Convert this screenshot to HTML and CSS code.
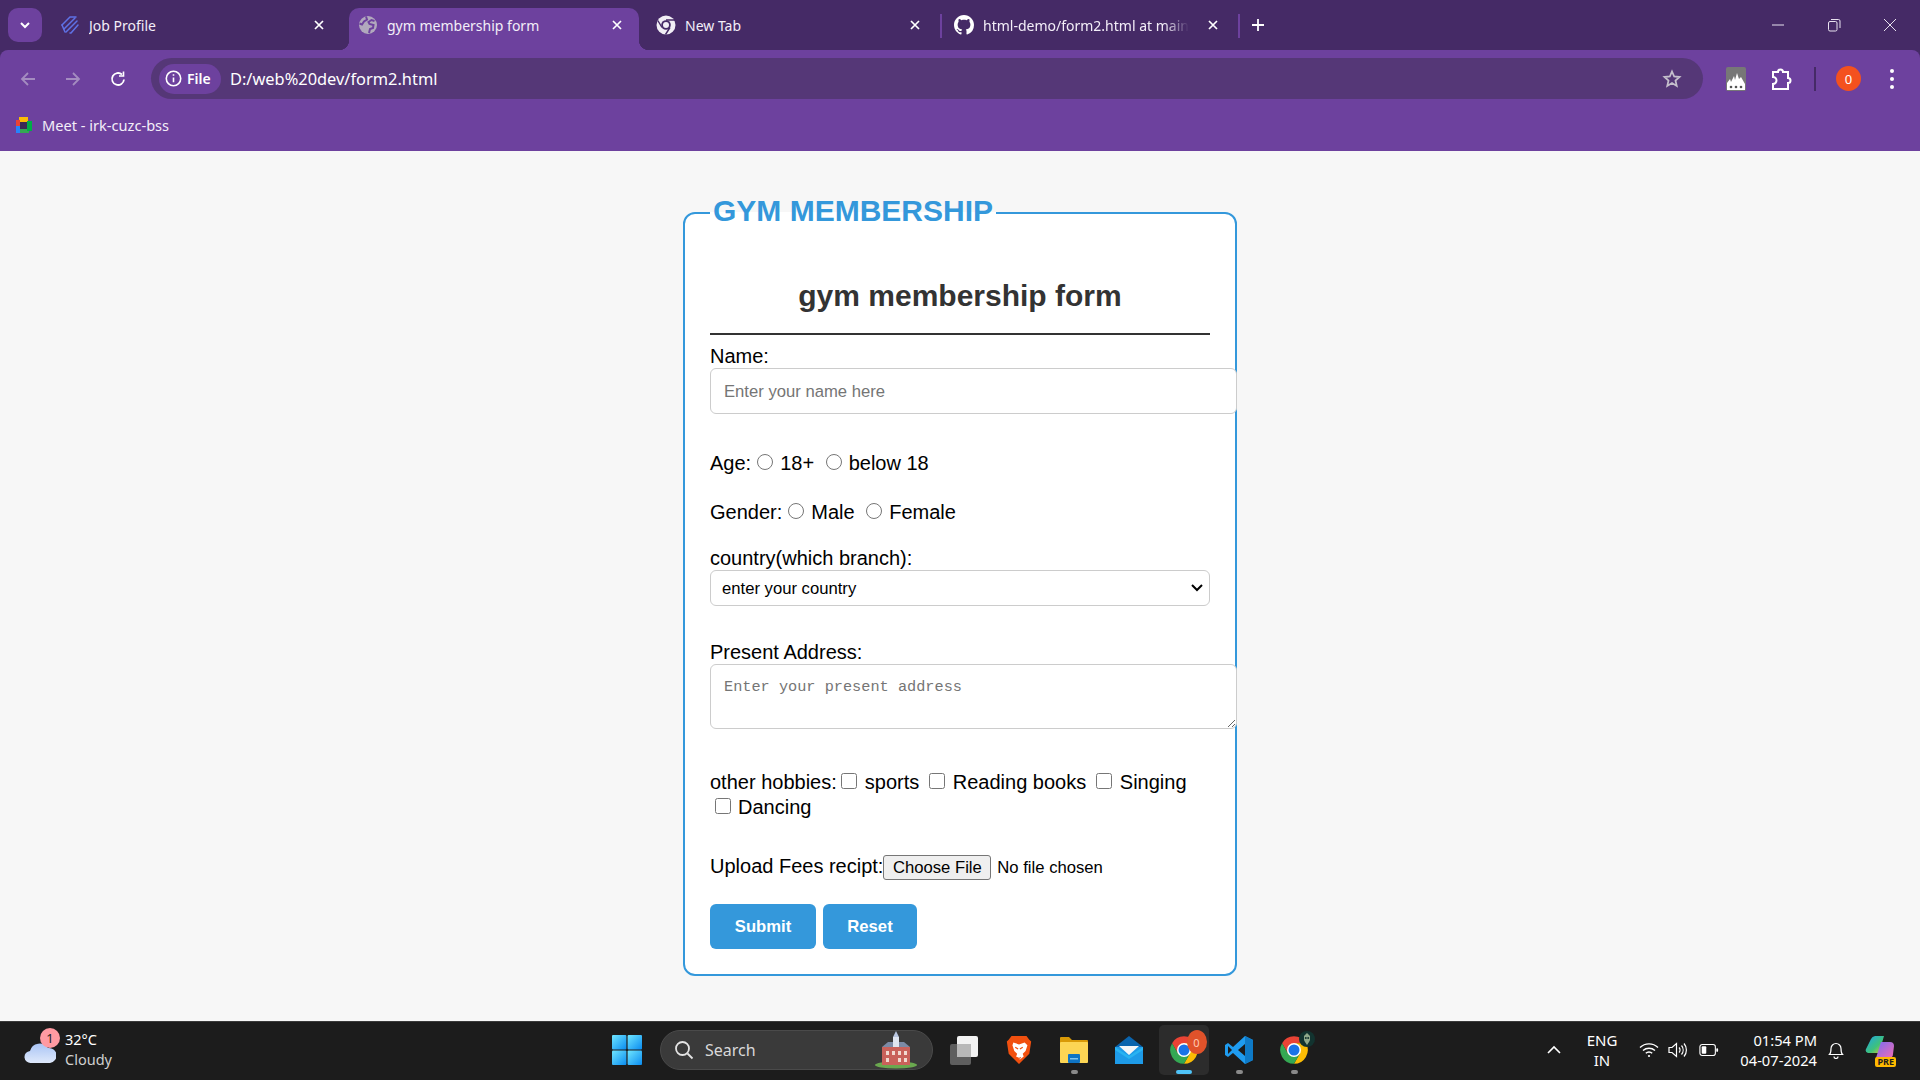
FILE: index.html
```html
<!DOCTYPE html>
<html lang="en">
<head>
    <meta charset="UTF-8">
    <title>gym membership form</title>
    <link rel="stylesheet" href="styles.css">
</head>
<body>

    <svg class="defs" width="0" height="0">
        <defs>
            <g id="chrome-logo">
                <path d="M2.47 6.5A11 11 0 0 1 21.53 6.5H12L7.24 14.75Z" fill="#ea4335"/>
                <path d="M21.53 6.5A11 11 0 0 1 12 23L16.76 14.75 12 6.5Z" fill="#fbbc04"/>
                <path d="M12 23A11 11 0 0 1 2.47 6.5L7.24 14.75H16.76Z" fill="#34a853"/>
                <circle cx="12" cy="12" r="5.6" fill="#fff"/>
                <circle cx="12" cy="12" r="4.4" fill="#1a73e8"/>
            </g>
            <linearGradient id="win-blue" x1="0" y1="0" x2="1" y2="1">
                <stop offset="0" stop-color="#6fe6ff"/>
                <stop offset="1" stop-color="#0a8cf0"/>
            </linearGradient>
            <linearGradient id="cloud-blue" x1="0" y1="0" x2="0" y2="1">
                <stop offset="0" stop-color="#a9c4f5"/>
                <stop offset="1" stop-color="#dfe9fb"/>
            </linearGradient>
            <linearGradient id="copilot-a" x1="0" y1="0" x2="1" y2="1">
                <stop offset="0" stop-color="#1fa4e8"/>
                <stop offset="0.6" stop-color="#3ec27a"/>
                <stop offset="1" stop-color="#e6c72e"/>
            </linearGradient>
            <linearGradient id="copilot-b" x1="0" y1="0" x2="1" y2="1">
                <stop offset="0" stop-color="#7a6cf0"/>
                <stop offset="1" stop-color="#f06cb4"/>
            </linearGradient>
        </defs>
    </svg>

    <header class="browser">
        <div class="tab-strip">
            <button class="tab-menu">
                <svg width="14" height="14" viewBox="0 0 14 14"><path d="M3 5l4 4 4-4" fill="none" stroke="#fff" stroke-width="2"/></svg>
            </button>

            <div class="tabs">
                <div class="tab">
                    <svg class="favicon" viewBox="0 0 20 20" fill="none" stroke="#5f72e6" stroke-width="1.5" stroke-linecap="round">
                        <path d="M2 10L10 2h6"/><path d="M4 14L15 3"/><path d="M6 17L17 6"/><path d="M10 18h1l7-8"/><path d="M2 10l3 7"/>
                    </svg>
                    <span class="tab-title">Job Profile</span>
                    <svg class="tab-close" viewBox="0 0 12 12"><path d="M2 2l8 8M10 2l-8 8" stroke="#fff" stroke-width="1.7"/></svg>
                </div>
                <span class="tab-sep clear"></span>
                <div class="tab active">
                    <svg class="favicon" viewBox="0 0 20 20">
                        <circle cx="10" cy="10" r="9" fill="#b1a8bd"/>
                        <path d="M8 1.5l1 3-3 2-2 3-2.5-1M11 18l1-4 3-1 .5-3-4-1-1-2 3-2 3 1" fill="none" stroke="#6d419e" stroke-width="2"/>
                    </svg>
                    <span class="tab-title">gym membership form</span>
                    <svg class="tab-close" viewBox="0 0 12 12"><path d="M2 2l8 8M10 2l-8 8" stroke="#fff" stroke-width="1.7"/></svg>
                </div>
                <span class="tab-sep clear"></span>
                <div class="tab">
                    <svg class="favicon" viewBox="0 0 20 20">
                        <circle cx="10" cy="10" r="9.5" fill="#f1eef5"/>
                        <circle cx="10" cy="10" r="4.8" fill="#452a66"/>
                        <circle cx="10" cy="10" r="3" fill="#f1eef5"/>
                        <path d="M10 5H19M6 12.5L1.8 5.5M14 12.5L9.5 19.5" stroke="#452a66" stroke-width="1.4"/>
                    </svg>
                    <span class="tab-title">New Tab</span>
                    <svg class="tab-close" viewBox="0 0 12 12"><path d="M2 2l8 8M10 2l-8 8" stroke="#fff" stroke-width="1.7"/></svg>
                </div>
                <span class="tab-sep"></span>
                <div class="tab">
                    <svg class="favicon" viewBox="0 0 16 16">
                        <path fill="#fff" d="M8 0C3.58 0 0 3.58 0 8c0 3.54 2.29 6.53 5.47 7.59.4.07.55-.17.55-.38 0-.19-.01-.82-.01-1.49-2.01.37-2.53-.49-2.69-.94-.09-.23-.48-.94-.82-1.13-.28-.15-.68-.52-.01-.53.63-.01 1.08.58 1.23.82.72 1.21 1.87.87 2.33.66.07-.52.28-.87.51-1.07-1.78-.2-3.64-.89-3.64-3.95 0-.87.31-1.59.82-2.15-.08-.2-.36-1.02.08-2.12 0 0 .67-.21 2.2.82.64-.18 1.32-.27 2-.27s1.36.09 2 .27c1.53-1.04 2.2-.82 2.2-.82.44 1.1.16 1.92.08 2.12.51.56.82 1.27.82 2.15 0 3.07-1.87 3.75-3.65 3.95.29.25.54.73.54 1.48 0 1.07-.01 1.93-.01 2.2 0 .21.15.46.55.38A8.01 8.01 0 0 0 16 8c0-4.42-3.58-8-8-8z"/>
                    </svg>
                    <span class="tab-title fade">html-demo/form2.html at main</span>
                    <svg class="tab-close" viewBox="0 0 12 12"><path d="M2 2l8 8M10 2l-8 8" stroke="#fff" stroke-width="1.7"/></svg>
                </div>
                <span class="tab-sep"></span>
                <svg class="new-tab" viewBox="0 0 14 14"><path d="M7 1v12M1 7h12" stroke="#fff" stroke-width="1.8"/></svg>
            </div>

            <div class="window-controls">
                <svg viewBox="0 0 14 14"><path d="M1 7h12" stroke="#e8e2ef" stroke-width="1"/></svg>
                <svg viewBox="0 0 14 14" fill="none" stroke="#e8e2ef"><rect x="1.5" y="3.5" width="8.5" height="9.5" rx="1.5"/><path d="M4 1.5h7.5a1.5 1.5 0 0 1 1.5 1.5v7"/></svg>
                <svg viewBox="0 0 14 14"><path d="M1 1l12 12M13 1L1 13" stroke="#e8e2ef" stroke-width="1"/></svg>
            </div>
        </div>

        <div class="toolbar">
            <div class="nav-buttons">
                <svg viewBox="0 0 18 18" fill="none" stroke="#a48cc0" stroke-width="1.8"><path d="M16 9H3M9 3L3 9l6 6"/></svg>
                <svg viewBox="0 0 18 18" fill="none" stroke="#a48cc0" stroke-width="1.8"><path d="M2 9h13M9 3l6 6-6 6"/></svg>
                <svg viewBox="0 0 18 18" fill="none" stroke="#fff" stroke-width="1.8"><path d="M15 9.5A6 6 0 1 1 13 4.5"/><path d="M14.5 1.5V6H10" stroke-width="1.6"/></svg>
            </div>
            <div class="address-bar">
                <div class="site-chip">
                    <svg viewBox="0 0 16 16" fill="none" stroke="#fff" stroke-width="1.5"><circle cx="8" cy="8" r="6.8"/><path d="M8 7v4.5M8 4v1.5"/></svg>
                    <span>File</span>
                </div>
                <span class="url">D:/web%20dev/form2.html</span>
                <svg class="star" viewBox="0 0 20 20"><path d="M10 2.5l2.2 5 5.3.5-4 3.6 1.2 5.3L10 14l-4.7 2.9 1.2-5.3-4-3.6 5.3-.5z" fill="none" stroke="#c5bfcc" stroke-width="1.8"/></svg>
            </div>
            <div class="toolbar-actions">
                <svg class="ext-fire" viewBox="0 0 20 24">
                    <rect width="20" height="24" rx="2" fill="#777"/>
                    <path d="M1 23v-7l3-4 1 3 3-6 1 4 2-7 2 6 2-2 4 7v6z" fill="#fff"/>
                    <circle cx="5" cy="20" r="1.3" fill="#555"/><circle cx="10" cy="20" r="1.3" fill="#555"/><circle cx="15" cy="20" r="1.3" fill="#555"/>
                </svg>
                <svg class="ext-puzzle" viewBox="0 0 22 24"><path d="M2 5h5a2.5 2.5 0 0 1 5 0h5v6a2.5 2.5 0 0 1 0 5v6H2v-5a3 3 0 0 0 0-7z" fill="none" stroke="#fff" stroke-width="2"/></svg>
                <span class="action-sep"></span>
                <span class="profile-badge">0</span>
                <svg class="kebab" viewBox="0 0 6 22"><circle cx="3" cy="3" r="2" fill="#fff"/><circle cx="3" cy="11" r="2" fill="#fff"/><circle cx="3" cy="19" r="2" fill="#fff"/></svg>
            </div>
        </div>

        <div class="bookmarks">
            <svg viewBox="0 0 18 18">
                <rect x="4" y="1" width="9" height="5" fill="#fbbc04"/>
                <rect x="1" y="4" width="4" height="6" fill="#ea4335"/>
                <rect x="1" y="10" width="4" height="7" fill="#2684fc"/>
                <rect x="5" y="13" width="9" height="4" fill="#34a853"/>
                <rect x="12" y="5" width="5" height="10" fill="#00ac47"/>
                <rect x="5" y="6" width="7" height="7" fill="#3c2a55"/>
            </svg>
            <span>Meet - irk-cuzc-bss</span>
        </div>
    </header>

    <main class="page">
        <fieldset class="card">
            <legend>GYM MEMBERSHIP</legend>
            <h1>gym membership form</h1>

            <form>
                <div class="name-row">
                    <label class="block-label" for="name">Name:</label>
                    <input class="text-input" type="text" id="name" placeholder="Enter your name here">
                </div>

                <div class="age-row">Age:<input type="radio" name="age"><label>18+</label> <input type="radio" name="age"><label>below 18</label></div>

                <div class="gender-row">Gender:<input type="radio" name="gender"><label>Male</label> <input type="radio" name="gender"><label>Female</label></div>

                <div class="country-row">
                    <label class="block-label" for="country">country(which branch):</label>
                    <select id="country">
                        <option>enter your country</option>
                        <option>India</option>
                    </select>
                </div>

                <div class="address-row">
                    <label class="block-label" for="address">Present Address:</label>
                    <textarea id="address" placeholder="Enter your present address"></textarea>
                </div>

                <div class="hobby-row">other hobbies:<input type="checkbox"><label>sports</label> <input type="checkbox"><label>Reading books</label> <input type="checkbox"><label>Singing</label> <input type="checkbox"><label>Dancing</label></div>

                <div class="upload-row">Upload Fees recipt:<input type="file"></div>

                <div class="button-row">
                    <button type="button" class="submit-btn">Submit</button>
                    <button type="button" class="reset-btn">Reset</button>
                </div>
            </form>
        </fieldset>
    </main>

    <footer class="taskbar">
        <div class="weather">
            <div class="weather-icon">
                <svg viewBox="0 0 32 24"><path d="M7 23a6 6 0 0 1-1-12 10 10 0 0 1 18-3 7 7 0 0 1 2 15z" fill="url(#cloud-blue)"/></svg>
                <span class="weather-badge">1</span>
            </div>
            <div class="weather-text">
                <span>32°C</span>
                <span class="dim">Cloudy</span>
            </div>
        </div>

        <div class="task-center">
            <svg class="win-logo" viewBox="0 0 30 30">
                <rect width="14.4" height="14.4" rx="1" fill="url(#win-blue)"/>
                <rect x="15.6" width="14.4" height="14.4" rx="1" fill="url(#win-blue)"/>
                <rect y="15.6" width="14.4" height="14.4" rx="1" fill="url(#win-blue)"/>
                <rect x="15.6" y="15.6" width="14.4" height="14.4" rx="1" fill="url(#win-blue)"/>
            </svg>

            <div class="search-box">
                <svg class="search-icon" viewBox="0 0 20 20" fill="none" stroke="#e4e4e4" stroke-width="1.8"><circle cx="8.5" cy="8.5" r="6.5"/><path d="M13.5 13.5l5 5"/></svg>
                <span>Search</span>
                <svg class="search-art" viewBox="0 0 44 38">
                    <ellipse cx="22" cy="34" rx="21" ry="3.5" fill="#6aa84f"/>
                    <rect x="8" y="16" width="28" height="18" fill="#c9615a"/>
                    <path d="M8 16l6-5h16l6 5z" fill="#7c8aa5"/>
                    <rect x="19" y="6" width="6" height="10" fill="#dfe5f0"/>
                    <path d="M22 0l3 6h-6z" fill="#b9c6e0"/>
                    <path d="M12 20h3v4h-3zM18 20h3v4h-3zM24 20h3v4h-3zM30 20h3v4h-3zM12 27h3v4h-3zM24 27h3v4h-3zM30 27h3v4h-3z" fill="#f2d9d0"/>
                </svg>
            </div>

            <div class="task-icon">
                <svg viewBox="0 0 30 30">
                    <rect x="1" y="9" width="21" height="21" rx="2" fill="#5e5e5e"/>
                    <rect x="8" y="1" width="21" height="21" rx="2" fill="#f2f2f2"/>
                    <rect x="8" y="9" width="14" height="13" fill="#b8b8b8"/>
                </svg>
            </div>
            <div class="task-icon">
                <svg viewBox="0 0 30 32">
                    <path d="M7 1h16l3 4 2 2-2 13-11 11L4 20 2 7l2-2z" fill="#f1500f"/>
                    <path d="M9 8l6 2 6-2 3 3-2 6-3 3 1 3-4 3-4-3 1-3-3-3-2-6z" fill="#fff"/>
                    <path d="M11 13l3 2M19 13l-3 2M13 24l2 1 2-1" stroke="#f1500f" stroke-width="1.3" fill="none"/>
                </svg>
            </div>
            <div class="task-icon open">
                <svg viewBox="0 0 30 30">
                    <path d="M1 3a1 1 0 0 1 1-1h8l3 3h15a1 1 0 0 1 1 1v4H1z" fill="#d99a07"/>
                    <rect x="1" y="7" width="28" height="21" rx="1" fill="#fcd554"/>
                    <rect x="9" y="19" width="12" height="9" rx="1" fill="#0f74c4"/>
                    <rect x="11" y="23" width="8" height="1.5" fill="#7fc3f0"/>
                </svg>
            </div>
            <div class="task-icon">
                <svg viewBox="0 0 30 30">
                    <path d="M15 1L1 12h28z" fill="#0a64ad"/>
                    <rect x="1" y="12" width="28" height="17" fill="#1e9be8"/>
                    <path d="M5 11h20l-10 9z" fill="#f4f6f8"/>
                    <path d="M1 12l14 9 14-9v3l-14 9-14-9z" fill="#29b3f2"/>
                </svg>
            </div>
            <div class="task-icon active open">
                <svg viewBox="0 0 24 24"><use href="#chrome-logo"/></svg>
                <span class="task-badge">0</span>
            </div>
            <div class="task-icon open">
                <svg viewBox="0 0 30 30">
                    <path d="M21 1l8 4v20l-8 4-12-11-5 4-3-2v-10l3-2 5 4z" fill="#1f9cf0"/>
                    <path d="M21 1l8 4v20l-8 4z" fill="#0e7ac7"/>
                    <path d="M21 9l-7 6 7 6z" fill="#1c1c1c"/>
                    <path d="M4 11l4 4-4 4z" fill="#1c1c1c"/>
                </svg>
            </div>
            <div class="task-icon open">
                <svg viewBox="0 0 24 24"><use href="#chrome-logo"/></svg>
                <svg class="profile-pic" viewBox="0 0 16 16">
                    <circle cx="8" cy="8" r="8" fill="#12332f"/>
                    <path d="M5 5l3-3 3 3v4l-1 2-2 3-2-3-1-2z" fill="#8fa88a"/>
                    <circle cx="6.8" cy="7" r="1" fill="#12332f"/><circle cx="9.2" cy="7" r="1" fill="#12332f"/>
                </svg>
            </div>
        </div>

        <div class="tray">
            <svg class="tray-chevron" viewBox="0 0 14 10"><path d="M1 8l6-6 6 6" fill="none" stroke="#fff" stroke-width="1.6"/></svg>
            <div class="lang"><span>ENG</span><span>IN</span></div>
            <svg class="tray-wifi" viewBox="0 0 20 16" fill="none" stroke="#fff" stroke-width="1.4"><path d="M1 5.5a13 13 0 0 1 18 0M4 8.5a9 9 0 0 1 12 0M6.8 11.3a4.5 4.5 0 0 1 6.4 0"/><circle cx="10" cy="14" r="1.1" fill="#fff" stroke="none"/></svg>
            <svg class="tray-volume" viewBox="0 0 20 16" fill="none" stroke="#fff" stroke-width="1.2"><path d="M1 5.5v5h3l4.5 4V1.5L4 5.5z"/><path d="M11 5.5a3.5 3.5 0 0 1 0 5M13.5 3.5a7 7 0 0 1 0 9M16 1.5a10 10 0 0 1 0 13"/></svg>
            <svg class="tray-battery" viewBox="0 0 22 14" fill="none"><rect x="1" y="1" width="17" height="12" rx="2.5" stroke="#fff" stroke-width="1.2"/><rect x="3" y="3" width="5" height="8" rx="1" fill="#fff"/><rect x="19" y="5" width="2" height="4" rx="1" fill="#fff"/></svg>
            <div class="clock"><span>01:54 PM</span><span>04-07-2024</span></div>
            <svg class="tray-bell" viewBox="0 0 16 18" fill="none" stroke="#fff" stroke-width="1.2"><path d="M1.5 13.5c1.5-1.5 1.5-3 1.5-6a5 5 0 0 1 10 0c0 3 0 4.5 1.5 6z"/><path d="M6 15.5a2 2 0 0 0 4 0"/></svg>
            <div class="copilot">
                <svg viewBox="0 0 30 24">
                    <path d="M10 1h9l-5 17H3a3 3 0 0 1-2-4l5-10a5 5 0 0 1 4-3z" fill="url(#copilot-a)"/>
                    <path d="M16 7h9a4 4 0 0 1 4 4l-1 8a4 4 0 0 1-4 4H11z" fill="url(#copilot-b)"/>
                </svg>
                <span class="pre-tag">PRE</span>
            </div>
        </div>
    </footer>

</body>
</html>
```

FILE: styles.css
```css
* {
    box-sizing: border-box;
}
html, body {
    height: 100%;
}
body {
    margin: 0;
    display: flex;
    flex-direction: column;
    overflow: hidden;
    font-family: "Liberation Sans", Arial, sans-serif;
    background: #f7f7f7;
}
.defs {
    position: absolute;
}

/* browser chrome */
.browser {
    flex: none;
    background: #452a66;
    color: #fff;
    font-family: "Noto Sans", sans-serif;
}
.tab-strip {
    height: 50px;
    display: flex;
    padding: 8px 0 0 8px;
}
.tab-menu {
    width: 34px;
    height: 34px;
    padding: 0;
    border: none;
    border-radius: 10px;
    background: #6d419e;
    display: flex;
    align-items: center;
    justify-content: center;
}
.tabs {
    display: flex;
    margin-left: 9px;
    flex: 1;
}
.tab {
    width: 290px;
    height: 42px;
    padding: 0 13px 8px 9px;
    display: flex;
    align-items: center;
    font-size: 14px;
    color: #f3eef8;
    position: relative;
}
.tab.active {
    background: #6d419e;
    border-radius: 10px 10px 0 0;
}
.tab.active::before, .tab.active::after {
    content: "";
    position: absolute;
    bottom: 0;
    width: 10px;
    height: 10px;
}
.tab.active::before {
    left: -10px;
    background: radial-gradient(circle at 0 0, transparent 10px, #6d419e 10.5px);
}
.tab.active::after {
    right: -10px;
    background: radial-gradient(circle at 100% 0, transparent 10px, #6d419e 10.5px);
}
.favicon {
    width: 20px;
    height: 20px;
    flex: none;
    margin-right: 9px;
}
.tab-title {
    flex: 1;
    white-space: nowrap;
    overflow: hidden;
}
.tab-title.fade {
    -webkit-mask-image: linear-gradient(to right, #000 88%, transparent);
    mask-image: linear-gradient(to right, #000 88%, transparent);
}
.tab-close {
    width: 12px;
    height: 12px;
    flex: none;
    margin-left: 18px;
    margin-right: 3px;
}
.tab-sep {
    width: 2px;
    height: 24px;
    margin: 6px 3px 0;
    background: #6d419e;
}
.tab-sep.clear {
    background: transparent;
}
.new-tab {
    width: 14px;
    height: 14px;
    margin: 10px 0 0 8px;
}
.window-controls {
    display: flex;
    gap: 42px;
    padding: 10px 23px 0 0;
}
.window-controls svg {
    width: 14px;
    height: 14px;
}

.toolbar {
    height: 55px;
    background: #6d419e;
    border-radius: 8px 8px 0 0;
    display: flex;
    align-items: center;
    padding: 2px 18px 0 19px;
}
.nav-buttons {
    display: flex;
    gap: 27px;
    margin-right: 24px;
}
.nav-buttons svg {
    width: 18px;
    height: 18px;
}
.address-bar {
    width: 1552px;
    height: 41px;
    border-radius: 21px;
    background: #553777;
    display: flex;
    align-items: center;
    padding: 0 21px 0 8px;
}
.site-chip {
    width: 62px;
    height: 30px;
    border-radius: 15px;
    background: #6d419e;
    display: flex;
    align-items: center;
    gap: 5px;
    padding-left: 6px;
    font-size: 14px;
    font-weight: 600;
}
.site-chip svg {
    width: 17px;
    height: 17px;
}
.url {
    margin-left: 9px;
    flex: 1;
    font-size: 16.4px;
}
.star {
    width: 20px;
    height: 20px;
}
.toolbar-actions {
    display: flex;
    align-items: center;
    margin-left: 23px;
}
.ext-fire {
    width: 20px;
    height: 24px;
}
.ext-puzzle {
    width: 22px;
    height: 24px;
    margin-left: 25px;
}
.action-sep {
    width: 2px;
    height: 24px;
    background: #452a66;
    margin: 0 0 0 21px;
}
.profile-badge {
    width: 25px;
    height: 25px;
    border-radius: 50%;
    background: #f4511e;
    margin-left: 20px;
    font-size: 13px;
    display: flex;
    align-items: center;
    justify-content: center;
}
.kebab {
    width: 6px;
    height: 22px;
    margin-left: 28px;
}

.bookmarks {
    height: 46px;
    background: #6d419e;
    display: flex;
    align-items: center;
    padding: 0 0 6px 15px;
    font-size: 14.6px;
    color: #f3eef8;
    gap: 9px;
}
.bookmarks svg {
    width: 18px;
    height: 18px;
}

/* the form */
.page {
    flex: 1;
    padding-top: 43px;
    background: #f7f7f7;
}
.card {
    width: 554px;
    margin: 0 auto;
    padding: 0 25px 25px;
    background: #fff;
    border: 2px solid #3498db;
    border-radius: 12px;
    font-size: 20px;
    color: #000;
    min-width: 0;
}
legend {
    padding: 0 3px 3px;
    font-size: 30px;
    line-height: 34px;
    font-weight: bold;
    color: #3498db;
}
h1 {
    margin: 46px 0 10px;
    padding-bottom: 19px;
    border-bottom: 2px solid #333;
    font-size: 30px;
    line-height: 37px;
    text-align: center;
    color: #333;
}
.block-label {
    display: block;
    height: 23px;
}
.text-input, textarea {
    display: block;
    width: 100%;
    box-sizing: content-box;
    padding: 13px 12px 13px 13px;
    border: 1px solid #ccc;
    border-radius: 6px;
    background: #fff;
    font-size: 16.67px;
    position: relative;
}
.text-input {
    height: 18px;
    padding-top: 14px;
    padding-bottom: 12px;
    font-family: "Liberation Sans", Arial, sans-serif;
}
textarea {
    height: 37px;
    font-family: "Liberation Mono", monospace;
    font-size: 15.25px;
}
input[type="radio"] {
    width: 16px;
    height: 16px;
    margin: 0 7px 0 6px;
}
input[type="checkbox"] {
    width: 16px;
    height: 16px;
    margin: 0 7.5px 0 4.5px;
}
.name-row {
    margin-bottom: 38px;
}
.age-row {
    margin-bottom: 25px;
    height: 24px;
}
.gender-row {
    margin-bottom: 22px;
    height: 24px;
}
.country-row {
    margin-bottom: 35px;
}
select {
    display: block;
    width: 500px;
    height: 36px;
    padding: 0 11px;
    appearance: none;
    background: #fff url("data:image/svg+xml,%3Csvg xmlns='http://www.w3.org/2000/svg' width='14' height='10' viewBox='0 0 14 10'%3E%3Cpath d='M2 2l5 5 5-5' fill='none' stroke='%23000' stroke-width='2'/%3E%3C/svg%3E") no-repeat right 5px center;
    border: 1px solid #ccc;
    border-radius: 6px;
    font-family: "Liberation Sans", Arial, sans-serif;
    font-size: 16.67px;
    color: #000;
}
.address-row {
    margin-bottom: 41px;
}
.hobby-row {
    margin-bottom: 34px;
    line-height: 25px;
}
.upload-row {
    margin-bottom: 25px;
    height: 25px;
    display: flex;
    align-items: center;
}
input[type="file"] {
    margin-top: 2px;
    font-family: "Liberation Sans", Arial, sans-serif;
    font-size: 16.67px;
}
input[type="file"]::file-selector-button {
    height: 25px;
    padding: 0 8.5px;
    margin-right: 6px;
    background: #efefef;
    border: 1px solid #767676;
    border-radius: 3px;
    font-size: 16.67px;
}
.button-row {
    display: flex;
    gap: 7px;
}
.submit-btn, .reset-btn {
    height: 45px;
    border: none;
    border-radius: 6px;
    background: #3498db;
    color: #fff;
    font-family: "Liberation Sans", Arial, sans-serif;
    font-size: 16.67px;
    font-weight: bold;
}
.submit-btn {
    width: 106px;
}
.reset-btn {
    width: 94px;
}

/* windows taskbar */
.taskbar {
    flex: none;
    height: 59px;
    background: #1c1c1c;
    border-top: 1px solid #3a3a3a;
    color: #fff;
    display: flex;
    align-items: center;
    padding-bottom: 2px;
    font-family: "Noto Sans", sans-serif;
    font-size: 14.5px;
    position: relative;
}
.weather {
    width: 612px;
    padding-left: 24px;
    display: flex;
    align-items: center;
}
.weather-icon {
    position: relative;
    width: 32px;
    height: 24px;
    margin-top: 4px;
}
.weather-icon svg {
    width: 32px;
    height: 24px;
    display: block;
}
.weather-badge {
    position: absolute;
    top: -12px;
    right: -4px;
    width: 20px;
    height: 20px;
    border-radius: 50%;
    background: #ff9aa2;
    color: #222;
    font-size: 13px;
    display: flex;
    align-items: center;
    justify-content: center;
}
.weather-text {
    margin-left: 9px;
    margin-top: -2px;
    display: flex;
    flex-direction: column;
    line-height: 20px;
}
.dim {
    color: #cfcfcf;
}
.task-center {
    display: flex;
    align-items: center;
}
.win-logo {
    width: 30px;
    height: 30px;
    margin-right: 18px;
}
.search-box {
    width: 273px;
    height: 40px;
    border-radius: 20px;
    background: #3a3a3a;
    border: 1px solid #4a4a4a;
    display: flex;
    align-items: center;
    padding-left: 13px;
    color: #d8d8d8;
    font-size: 16px;
    margin-right: 3px;
}
.search-icon {
    width: 20px;
    height: 20px;
    margin-right: 11px;
}
.search-art {
    width: 44px;
    height: 38px;
    margin-left: auto;
    margin-right: 14px;
}
.task-icon {
    width: 55px;
    height: 50px;
    display: flex;
    align-items: center;
    justify-content: center;
    position: relative;
}
.task-icon svg {
    width: 30px;
    height: 30px;
}
.task-icon.open::after {
    content: "";
    position: absolute;
    bottom: 1px;
    left: 50%;
    margin-left: -3px;
    width: 7px;
    height: 4px;
    border-radius: 2px;
    background: #8a8a8a;
}
.task-icon.active {
    background: #2c2c2c;
    border-radius: 5px;
    width: 50px;
    margin: 0 2.5px;
}
.task-icon.active::after {
    margin-left: -8px;
    width: 16px;
    background: #4fc3f7;
}
.task-badge {
    position: absolute;
    top: 5px;
    right: 2px;
    width: 20px;
    height: 24px;
    border-radius: 50%;
    background: #e0522a;
    color: #ffc9b5;
    font-size: 11px;
    display: flex;
    align-items: center;
    justify-content: center;
}
.task-icon .profile-pic {
    position: absolute;
    top: 4px;
    right: 6px;
    width: 16px;
    height: 20px;
}
.tray {
    margin-left: auto;
    display: flex;
    align-items: center;
    padding-right: 25px;
}
.tray-chevron {
    width: 14px;
    height: 10px;
}
.lang {
    width: 40px;
    margin-left: 21px;
    display: flex;
    flex-direction: column;
    align-items: center;
    line-height: 20px;
    font-size: 15px;
}
.tray-wifi {
    width: 20px;
    height: 16px;
    margin-left: 17px;
}
.tray-volume {
    width: 20px;
    height: 16px;
    margin-left: 9px;
}
.tray-battery {
    width: 20px;
    height: 14px;
    margin-left: 11px;
}
.clock {
    width: 90px;
    margin-left: 8px;
    margin-top: -1px;
    display: flex;
    flex-direction: column;
    align-items: flex-end;
    line-height: 20px;
    font-size: 14.7px;
}
.tray-bell {
    width: 16px;
    height: 18px;
    margin-left: 11px;
}
.copilot {
    width: 30px;
    height: 30px;
    margin-left: 21px;
    position: relative;
}
.copilot svg {
    width: 30px;
    height: 24px;
    display: block;
}
.pre-tag {
    position: absolute;
    bottom: -2px;
    right: -1px;
    padding: 0 2px;
    border-radius: 2px;
    background: #ffb900;
    color: #1c1c1c;
    font-size: 9px;
    font-weight: 700;
    line-height: 10px;
}
```
